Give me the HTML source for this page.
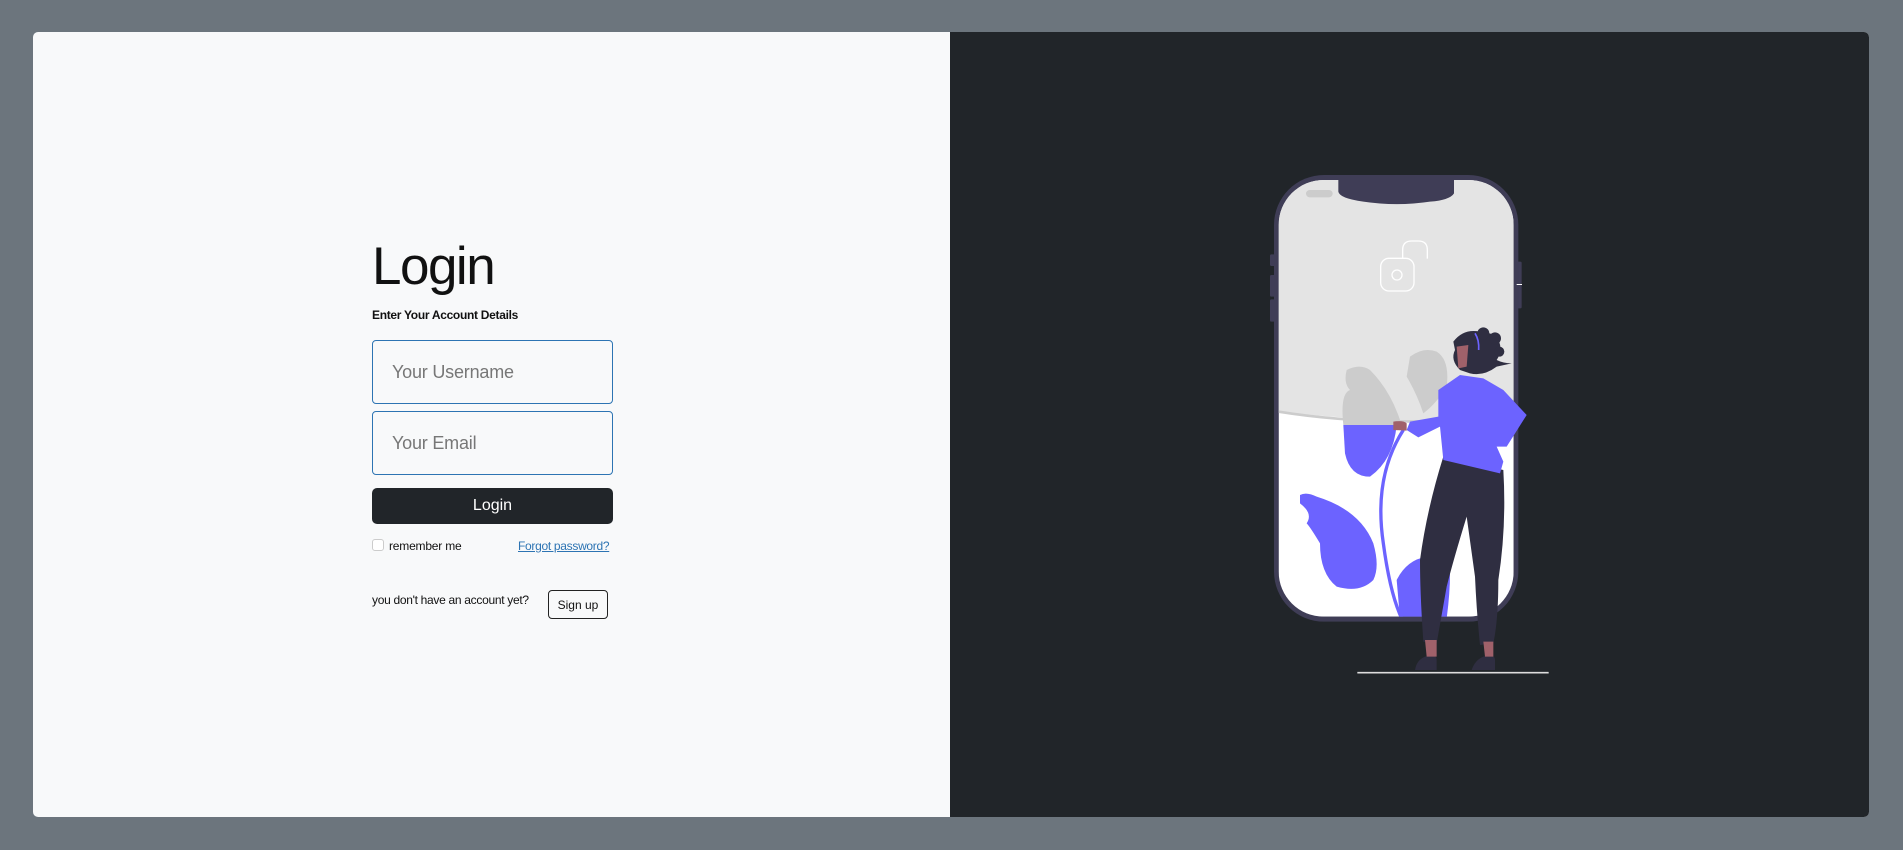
<!DOCTYPE html>
<html><head><meta charset="utf-8"><style>
*{box-sizing:border-box;margin:0;padding:0}
html,body{width:1903px;height:850px;overflow:hidden;background:#6c757d;font-family:"Liberation Sans",sans-serif}
.card{position:absolute;left:33px;top:32px;width:1836px;height:785px;border-radius:5px;overflow:hidden;background:#f8f9fa}
.right{position:absolute;left:917px;top:0;width:919px;height:785px;background:#212529}
.abs{position:absolute}
h1{position:absolute;left:339px;top:208px;font-weight:300;font-size:53px;color:#111;line-height:1;letter-spacing:-1.5px}
.sub{left:339px;top:276px;font-size:12px;font-weight:bold;color:#111;letter-spacing:-0.3px}
.inp{left:339px;width:241px;height:64px;border:1px solid #2d74b3;border-radius:4px;background:#f8f9fa;font-size:18px;color:#777;padding:21px 0 0 19px;letter-spacing:-0.2px}
.btn{left:339px;top:456px;width:241px;height:36px;background:#212529;border-radius:5px;color:#fff;font-size:16px;text-align:center;line-height:36px}
.cb{left:339px;top:507px;width:12px;height:12px;border:1px solid #ccc;border-radius:3px;background:#fff}
.rm{left:356px;top:507px;font-size:12px;color:#111;letter-spacing:-0.2px}
.fp{left:485px;top:507px;font-size:12px;color:#2d74b3;text-decoration:underline;letter-spacing:-0.3px}
.na{left:339px;top:561px;font-size:12px;color:#111;letter-spacing:-0.3px}
.su{left:515px;top:558px;width:60px;height:29px;border:1px solid #222;border-radius:4px;font-size:12px;text-align:center;line-height:29px;color:#111}
</style></head><body>
<div class="card">
<h1>Login</h1>
<div class="abs sub">Enter Your Account Details</div>
<div class="abs inp" style="top:308px">Your Username</div>
<div class="abs inp" style="top:379px">Your Email</div>
<div class="abs btn">Login</div>
<div class="abs cb"></div>
<div class="abs rm">remember me</div>
<div class="abs fp">Forgot password?</div>
<div class="abs na">you don't have an account yet?</div>
<div class="abs su">Sign up</div>
<div class="right"></div>
</div>
<svg class="abs" style="left:1250px;top:160px" width="320" height="520" viewBox="0 0 960 1560">
<defs><clipPath id="sc"><rect x="86" y="60" width="705" height="1310" rx="135"/></clipPath></defs>
<g fill="#3f3d56">
<rect x="60" y="283" width="22" height="35" rx="4"/><rect x="60" y="345" width="22" height="65" rx="4"/><rect x="60" y="418" width="22" height="67" rx="4"/>
<rect x="798" y="305" width="17" height="140" rx="4"/>
<rect x="72" y="45" width="733" height="1340" rx="150"/>
</g>
<rect x="800" y="372" width="16" height="3" fill="#fff"/>
<g clip-path="url(#sc)">
<rect x="86" y="60" width="705" height="1310" fill="#fff"/>
<path d="M86 60H791V770Q500 800 86 755Z" fill="#e4e4e4"/>
<path d="M86 755Q400 805 791 770" stroke="#ccc" stroke-width="8" fill="none"/>
<path d="M265 50H612V100Q600 120 540 125Q440 140 340 125Q268 115 265 95Z" fill="#3f3d56"/>
<rect x="168" y="90" width="80" height="22" rx="11" fill="#ccc"/>
<g stroke="#fff" stroke-width="4" fill="none"><rect x="392" y="295" width="100" height="98" rx="25"/><path d="M458 295V270Q458 243 485 243H505Q532 243 532 270V296"/><circle cx="441" cy="345" r="15"/></g>
<path d="M290 630Q330 610 360 630Q420 690 450 780L445 795H280Q270 700 300 690Q280 670 290 630Z" fill="#ccc"/>
<path d="M480 590Q520 560 560 575Q600 600 590 680Q560 730 520 760Q500 700 470 650Z" fill="#ccc"/>
<path d="M280 795H440Q430 900 360 950Q300 950 285 880Z" fill="#6c63ff"/>
<path d="M150 1005Q170 995 200 1010Q330 1050 370 1150Q390 1220 370 1260Q330 1300 260 1280Q210 1240 210 1150Q180 1100 170 1090Q190 1060 150 1030Z" fill="#6c63ff"/>
<path d="M460 810Q370 950 400 1150Q420 1300 455 1375" stroke="#6c63ff" stroke-width="10" fill="none"/>
<path d="M440 1260Q470 1200 530 1190L600 1240Q600 1300 590 1375H450Z" fill="#6c63ff"/>
</g>
<path d="M322 1538H896" stroke="#ddd" stroke-width="5"/>
<g fill="#2f2e41">
<path d="M580 890L760 930Q770 1100 745 1260Q745 1380 730 1450L690 1455Q680 1360 675 1250L650 1070Q610 1200 590 1280L560 1450L520 1445Q510 1300 510 1200Q530 1050 580 890Z"/>
<path d="M525 1490Q560 1480 560 1500V1530H495Q500 1500 525 1490Z"/><path d="M700 1490Q735 1480 735 1500V1530H665Q675 1500 700 1490Z"/>
<path d="M610 545Q640 505 690 515Q740 520 745 540Q760 570 740 600Q760 610 785 610L740 620Q700 650 660 640L630 630Q600 600 615 570Z"/>
<circle cx="735" cy="535" r="18"/><circle cx="748" cy="575" r="15"/><circle cx="700" cy="520" r="18"/>
</g>
<g fill="#a0616a"><path d="M620 560L655 555L650 620L625 625Z"/><path d="M525 1440H560V1490H530Z"/><path d="M700 1445H730V1490H705Z"/><path d="M430 785Q460 780 470 790V812L430 810Z"/></g>
<path d="M675 520Q688 540 686 570" stroke="#6c63ff" stroke-width="5" fill="none"/>
<path d="M630 645L700 655L760 690L830 765L770 860L740 860L760 905L750 940L580 900L570 800L505 832L470 810L480 785L565 770L565 690Z" fill="#6c63ff"/>
</svg>
</body></html>
